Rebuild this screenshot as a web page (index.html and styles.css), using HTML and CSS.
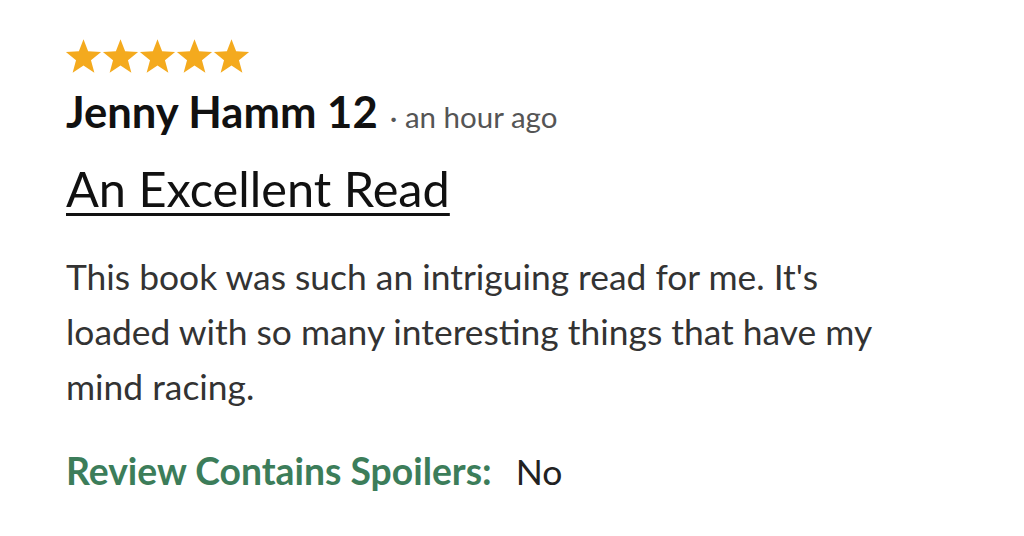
FILE: index.html
```html
<!DOCTYPE html>
<html lang="en">
<head>
<meta charset="utf-8">
<link rel="stylesheet" href="styles.css">
</head>
<body>
<div class="review">
  <div class="stars">
    <svg class="star" viewBox="0 0 24 24"><polygon points="12,0.8 15,8.67 23.41,9.09 16.85,14.38 19.05,22.51 12,17.9 4.95,22.51 7.15,14.38 0.59,9.09 9,8.67"/></svg>
    <svg class="star" viewBox="0 0 24 24"><polygon points="12,0.8 15,8.67 23.41,9.09 16.85,14.38 19.05,22.51 12,17.9 4.95,22.51 7.15,14.38 0.59,9.09 9,8.67"/></svg>
    <svg class="star" viewBox="0 0 24 24"><polygon points="12,0.8 15,8.67 23.41,9.09 16.85,14.38 19.05,22.51 12,17.9 4.95,22.51 7.15,14.38 0.59,9.09 9,8.67"/></svg>
    <svg class="star" viewBox="0 0 24 24"><polygon points="12,0.8 15,8.67 23.41,9.09 16.85,14.38 19.05,22.51 12,17.9 4.95,22.51 7.15,14.38 0.59,9.09 9,8.67"/></svg>
    <svg class="star" viewBox="0 0 24 24"><polygon points="12,0.8 15,8.67 23.41,9.09 16.85,14.38 19.05,22.51 12,17.9 4.95,22.51 7.15,14.38 0.59,9.09 9,8.67"/></svg>
  </div>
  <div class="byline">
    <span class="author">Jenny Hamm 12</span>
    <span class="meta">· an hour ago</span>
  </div>
  <h2 class="title">An Excellent Read</h2>
  <p class="body">This book was such an intriguing read for me. It's<br>loaded with so many interesting things that have my<br>mind racing.</p>
  <div class="spoiler">
    <span class="spoiler-label">Review Contains Spoilers:</span>
    <span class="spoiler-value">No</span>
  </div>
</div>
</body>
</html>
```
FILE: styles.css
```css
html, body {
  margin: 0;
  padding: 0;
  background: #ffffff;
}
body {
  font-family: Lato, "Open Sans", sans-serif;
  color: #222;
}
.review {
  padding: 38px 0 0 66px;
}
.stars {
  display: flex;
  gap: 0;
  height: 38px;
  margin-left: -1px;
}
.star {
  width: 37px;
  height: 37px;
  fill: #f4aa1e;
}
.byline {
  display: flex;
  align-items: baseline;
  margin-top: 10px;
}
.author {
  font-weight: 700;
  font-size: 43.6px;
  color: #111;
  line-height: 50px;
}
.meta {
  font-size: 29.5px;
  color: #555;
  margin-left: 12px;
}
.title {
  margin: 23px 0 0 0;
  font-weight: 400;
  font-size: 48.7px;
  line-height: 58px;
  color: #111;
  text-decoration: underline;
  text-decoration-thickness: 3px;
  text-underline-offset: 6px;
}
.body {
  margin: 32px 0 0 0;
  font-size: 35.4px;
  line-height: 55px;
  color: #333;
}
.spoiler {
  margin-top: 35px;
  display: flex;
  align-items: baseline;
  line-height: 44px;
}
.spoiler-label {
  font-weight: 700;
  font-size: 37.3px;
  color: #3c7d5a;
}
.spoiler-value {
  margin-left: 24px;
  font-size: 35.5px;
  color: #222;
}
```
